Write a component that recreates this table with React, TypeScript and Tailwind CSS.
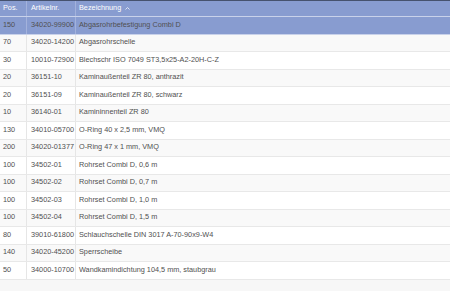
import React from "react";

const rows = [
  ["150", "34020-99900", "Abgasrohrbefestigung Combi D"],
  ["70", "34020-14200", "Abgasrohrschelle"],
  ["30", "10010-72900", "Blechschr ISO 7049 ST3,5x25-A2-20H-C-Z"],
  ["20", "36151-10", "Kaminaußenteil ZR 80, anthrazit"],
  ["20", "36151-09", "Kaminaußenteil ZR 80, schwarz"],
  ["10", "36140-01", "Kamininnenteil ZR 80"],
  ["130", "34010-05700", "O-Ring 40 x 2,5 mm, VMQ"],
  ["200", "34020-01377", "O-Ring 47 x 1 mm, VMQ"],
  ["100", "34502-01", "Rohrset Combi D, 0,6 m"],
  ["100", "34502-02", "Rohrset Combi D, 0,7 m"],
  ["100", "34502-03", "Rohrset Combi D, 1,0 m"],
  ["100", "34502-04", "Rohrset Combi D, 1,5 m"],
  ["80", "39010-61800", "Schlauchschelle DIN 3017 A-70-90x9-W4"],
  ["140", "34020-45200", "Sperrscheibe"],
  ["50", "34000-10700", "Wandkamindichtung 104,5 mm, staubgrau"],
];

export default function App() {
  return (
    <div className="w-[450px] h-[291px] overflow-hidden bg-[#f7f7f7] font-['Liberation_Sans',Arial,sans-serif] text-[7.3px] text-[#505050] whitespace-nowrap">
      <div className="flex h-[17px] border-t border-[#46526e] border-b border-b-[#c9d2ea] bg-[#889cd0] text-white">
        <div className="w-[27px] pl-[3px] flex items-center border-r border-[#a3b2dc]">Pos.</div>
        <div className="w-[49px] pl-[4px] flex items-center border-r border-[#a3b2dc]">Artikelnr.</div>
        <div className="flex-1 pl-[3px] flex items-center gap-[4px]">
          Bezeichnung
          <svg width="5" height="3" viewBox="0 0 5 3">
            <path d="M0.5 2.5 L2.5 0.5 L4.5 2.5" fill="none" stroke="#e6ebf7" strokeWidth="0.9" />
          </svg>
        </div>
      </div>
      {rows.map((r, i) => {
        const sel = i === 0;
        const bg = sel ? "bg-[#889cd0]" : i % 2 === 1 ? "bg-[#f9f9f9]" : "bg-white";
        const line = sel ? "border-[#a3b2dc]" : "border-[#e6e6e6]";
        return (
          <div
            key={i}
            className={`flex h-[17.5px] border-b ${sel ? "border-b-[#c9d2ea]" : "border-b-[#e8e8e8]"} ${bg}`}
          >
            <div className={`w-[27px] pl-[3px] flex items-center border-r ${line}`}>{r[0]}</div>
            <div className={`w-[49px] pl-[4px] flex items-center border-r ${line}`}>{r[1]}</div>
            <div className="flex-1 pl-[3px] flex items-center">{r[2]}</div>
          </div>
        );
      })}
    </div>
  );
}
